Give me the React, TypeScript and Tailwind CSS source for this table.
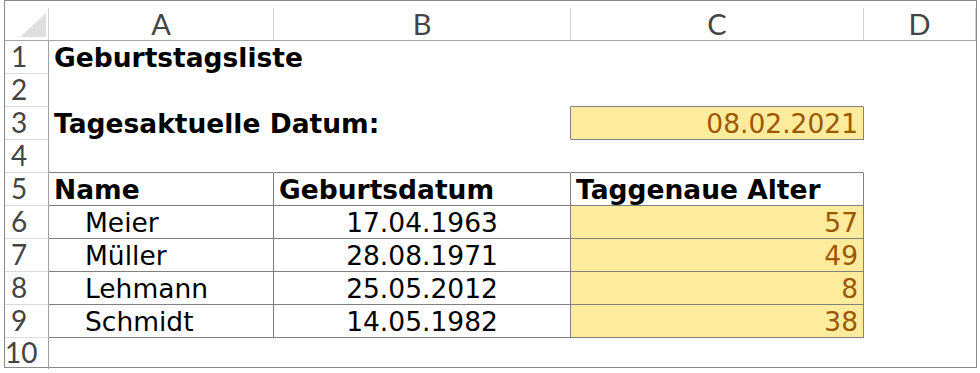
const people = [
  { name: "Meier", born: "17.04.1963", age: 57 },
  { name: "Müller", born: "28.08.1971", age: 49 },
  { name: "Lehmann", born: "25.05.2012", age: 8 },
  { name: "Schmidt", born: "14.05.1982", age: 38 },
];

const line = "border-[#808080]";

function ColHead({ label }: { label?: string }) {
  return (
    <div className="flex border-b border-[#a6a6a6]">
      <div className="flex flex-1 items-end justify-center pb-[2px] font-['Lato',sans-serif] text-[29px] leading-none text-[#444]">
        {label}
      </div>
      <div className="mt-[7px] w-px bg-[#d4d4d4]" />
    </div>
  );
}

function RowHead({ n, last }: { n: number; last?: boolean }) {
  return (
    <div
      className={`flex items-end border-r border-r-[#a0a0a0] pb-[3px] font-['Lato',sans-serif] text-[28px] leading-none text-[#444] ${
        last ? "" : "border-b border-b-[#dadada]"
      }`}
    >
      <span className="w-[28px] whitespace-nowrap text-center">{n}</span>
    </div>
  );
}

type CellProps = {
  children?: React.ReactNode;
  className?: string;
};

// every body cell keeps a 1px right/bottom border so the grid lines stay put
function Cell({ children, className = "" }: CellProps) {
  return (
    <div className={`flex min-w-0 items-end whitespace-nowrap border-b border-r pb-[2px] ${className}`}>
      {children}
    </div>
  );
}

const none = "border-transparent";
const yellow = "bg-[#ffeb9c] text-[#9c5700]";

export default function App() {
  return (
    <div className="h-[373px] w-[980px] overflow-hidden bg-white pl-1 font-['DejaVu_Sans',Verdana,sans-serif] text-[26.5px] leading-none text-black">
      <div className="grid h-[368px] w-[973px] grid-cols-[44px_225px_297px_293px_1fr] grid-rows-[40px_repeat(9,33px)_1fr] border border-[#8a8a8a]">
        {/* column headers */}
        <div className="relative flex border-b border-[#a6a6a6]">
          <svg className="absolute left-[15px] top-[12px]" width="26" height="24" viewBox="0 0 26 24">
            <polygon points="0,24 26,24 26,0" fill="#dfdfdf" />
          </svg>
          <div className="flex-1" />
          <div className="mt-[7px] w-px bg-[#d4d4d4]" />
        </div>
        <ColHead label="A" />
        <ColHead label="B" />
        <ColHead label="C" />
        <ColHead label="D" />

        {/* row 1 */}
        <RowHead n={1} />
        <Cell className={`${none} pl-[5px] font-bold`}>Geburtstagsliste</Cell>
        <Cell className={none} />
        <Cell className={none} />
        <Cell className={none} />

        {/* row 2 */}
        <RowHead n={2} />
        <Cell className={none} />
        <Cell className={none} />
        <Cell className="border-r-transparent border-b-[#808080]" />
        <Cell className={none} />

        {/* row 3 */}
        <RowHead n={3} />
        <Cell className={`${none} pl-[5px] font-bold`}>Tagesaktuelle Datum:</Cell>
        <Cell className="border-b-transparent border-r-[#808080]" />
        <Cell className={`${line} ${yellow} justify-end pr-[5px]`}>08.02.2021</Cell>
        <Cell className={none} />

        {/* row 4 */}
        <RowHead n={4} />
        <Cell className="border-r-transparent border-b-[#808080]" />
        <Cell className="border-r-transparent border-b-[#808080]" />
        <Cell className="border-r-transparent border-b-[#808080]" />
        <Cell className={none} />

        {/* row 5: table header */}
        <RowHead n={5} />
        <Cell className={`${line} pl-[5px] font-bold`}>Name</Cell>
        <Cell className={`${line} pl-[5px] font-bold`}>Geburtsdatum</Cell>
        <Cell className={`${line} pl-[5px] font-bold`}>Taggenaue Alter</Cell>
        <Cell className={none} />

        {people.map((p, i) => (
          <div key={p.name} className="contents">
            <RowHead n={6 + i} />
            <Cell className={`${line} pl-[36px]`}>{p.name}</Cell>
            <Cell className={`${line} justify-center`}>{p.born}</Cell>
            <Cell className={`${line} ${yellow} justify-end pr-[5px]`}>{p.age}</Cell>
            <Cell className={none} />
          </div>
        ))}

        {/* row 10 */}
        <RowHead n={10} last />
        <Cell className={none} />
        <Cell className={none} />
        <Cell className={none} />
        <Cell className={none} />
      </div>
    </div>
  );
}
